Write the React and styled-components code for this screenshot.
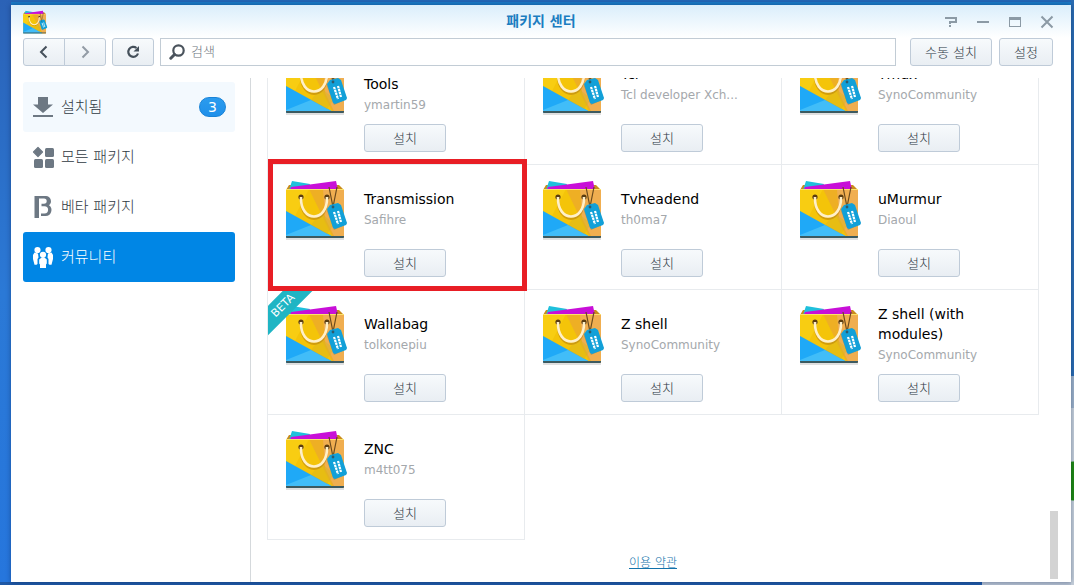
import React from 'react';
import styled, { createGlobalStyle, css } from 'styled-components';

const GlobalStyle = createGlobalStyle`
  * {
    box-sizing: border-box;
  }

  body {
    margin: 0;
    font-family: 'DejaVu Sans', 'Noto Sans CJK KR', sans-serif;
    font-size: 13px;
  }

  button,
  input {
    font: inherit;
  }
`;

const Desktop = styled.div`
  height: 100vh;
  padding: 5px 3px 3px 11px;
  overflow: hidden;
  background: radial-gradient(circle at 100% 481px, #1f8a12 19px, transparent 20px)
      right top / 14px 100% no-repeat,
    linear-gradient(#2a6cb2 376px, #9cb1c9 376px, #9cb1c9 408px, #c5cfda 408px)
      right top / 3px 100% no-repeat,
    linear-gradient(#b3bfd0, #b3bfd0) right bottom / 92px 3px no-repeat,
    linear-gradient(#1f58a5, #1f58a5) left bottom / 100% 3px no-repeat,
    linear-gradient(#2266b5 2px, #1a7bc8 2px) 11px top / 100% 5px no-repeat,
    linear-gradient(#2b62b6, #2b79d6 50%, #2676dd);
`;

const Window = styled.div`
  display: flex;
  flex-direction: column;
  height: 100%;
  background: linear-gradient(#daeefb, #fff 33px);
  box-shadow: 0 0 5px rgba(0, 20, 60, 0.4);
`;

const TitleBar = styled.header`
  display: grid;
  grid-template-columns: 1fr auto 1fr;
  align-items: center;
  height: 33px;
  padding: 0 11px;
`;

const Title = styled.h1`
  margin: 0;
  padding-bottom: 2px;
  font-size: 14px;
  line-height: 20px;
  font-weight: bold;
  color: #1b7dc0;
`;

const Controls = styled.div`
  display: flex;
  justify-content: flex-end;
  gap: 18px;
  padding-right: 6px;
`;

const Control = styled.button`
  display: flex;
  padding: 0;
  border: 0;
  background: none;
  color: #8c9aa5;
`;

const Toolbar = styled.div`
  display: flex;
  gap: 6px;
  padding: 0 18px 0 12px;
`;

const Button = styled.button`
  display: flex;
  align-items: center;
  justify-content: center;
  flex: none;
  width: ${props => props.$width}px;
  height: 28px;
  padding: 0 0 2px;
  border: 1px solid #bfcbd8;
  border-radius: 3px;
  background: linear-gradient(#f7fafc, #e9eef3);
  color: #2c3844;
  font-weight: 300;
`;

const ToolButton = styled(Button)`
  padding: 0;
  color: #45505b;
`;

const ButtonGroup = styled.div`
  display: flex;

  ${ToolButton}:first-child {
    border-radius: 3px 0 0 3px;
  }

  ${ToolButton}:last-child {
    margin-left: -1px;
    border-radius: 0 3px 3px 0;
    color: #929ba5;
  }
`;

const Actions = styled.div`
  display: flex;
  gap: 7px;
  margin-left: 8px;
`;

const Search = styled.label`
  display: flex;
  align-items: center;
  flex: 1;
  gap: 6px;
  height: 28px;
  padding: 0 8px;
  border: 1px solid #c2ccd5;
  background: #fff;
  color: #4a535c;
`;

const SearchInput = styled.input`
  flex: 1;
  min-width: 0;
  padding: 0 0 2px;
  border: 0;
  outline: 0;
  background: none;
  font-weight: 300;

  &::placeholder {
    color: #6c757e;
    opacity: 1;
  }
`;

const Body = styled.div`
  display: flex;
  flex: 1;
  min-height: 0;
  margin-top: 12px;
`;

const Sidebar = styled.nav`
  width: 240px;
  flex: none;
  padding: 4px 15px 0 12px;
  border-right: 1px solid #d5d9dc;
`;

const NavLabel = styled.span`
  padding-bottom: 4px;
`;

const NavItem = styled.a`
  display: flex;
  align-items: center;
  gap: 7px;
  height: 50px;
  padding: 0 9px;
  border-radius: 3px;
  font-size: 15px;
  font-weight: 300;
  color: #2f3942;
  text-decoration: none;

  svg {
    color: #6d7883;
  }

  ${props =>
    props.$hover &&
    css`
      background: #f3f9fe;
    `}

  ${props =>
    props.$active &&
    css`
      background: #0086e5;
      color: #fff;

      svg {
        color: #fff;
      }
    `}
`;

const Badge = styled.span`
  width: 27px;
  margin-left: auto;
  border: 1px solid #1883d8;
  border-radius: 10px;
  background: linear-gradient(#2b9bee, #1f90ea);
  color: #fff;
  font-size: 14px;
  font-weight: normal;
  line-height: 18px;
  text-align: center;
`;

const Content = styled.main`
  display: flex;
  flex-direction: column;
  justify-content: flex-end;
  flex: 1;
  min-width: 0;
  padding: 0 11px 0 16px;
  overflow: hidden;
`;

const Grid = styled.div`
  display: grid;
  flex: none;
  grid-template-columns: repeat(3, 1fr);
  padding: 0 1px 1px 0;
`;

const Card = styled.article`
  position: relative;
  display: flex;
  align-items: flex-start;
  gap: 14px;
  margin: 0 -1px -1px 0;
  padding: 14px 24px 12px 16px;
  border: 1px solid #e8ebee;
`;

const Info = styled.div`
  flex: 1;
  min-width: 0;
`;

const Text = styled.div`
  display: flex;
  flex-direction: column;
  justify-content: center;
  height: 60px;
  margin-bottom: 10px;
  line-height: 20px;
`;

const Name = styled.h2`
  margin: 0;
  font-size: 14px;
  font-weight: normal;
  color: #000;
`;

const Author = styled.span`
  height: 20px;
  font-size: 12px;
  line-height: 22px;
  white-space: nowrap;
  color: #a4a8ac;
`;

const Highlight = styled.span`
  position: absolute;
  z-index: 2;
  inset: -6px -3px -2px 0;
  border: 5px solid #e81e25;
  pointer-events: none;
`;

const Corner = styled.div`
  position: absolute;
  z-index: 1;
  top: 0;
  left: 0;
  width: 46px;
  height: 46px;
  overflow: hidden;
`;

const Ribbon = styled.span`
  position: absolute;
  top: 5px;
  left: -25px;
  width: 80px;
  background: #1fb5c4;
  color: #fff;
  font-size: 11px;
  line-height: 21px;
  text-align: center;
  transform: rotate(-45deg);
`;

const Footer = styled.footer`
  flex: none;
  height: 42px;
  padding-top: 13px;
  text-align: center;
  font-size: 12px;
  line-height: 20px;
`;

const TermsLink = styled.a`
  color: #1272ab;
  font-weight: 300;
`;

const Track = styled.div`
  display: flex;
  flex-direction: column;
  justify-content: flex-end;
  width: 8px;
  margin: 0 13px 3px 0;
`;

const Thumb = styled.div`
  height: 12%;
  min-height: 68px;
  background: #d3d3d3;
`;

const BagSvg = styled.svg`
  display: block;
  flex: none;
`;

const Bag = ({ width = 66, height = 66, viewBox = '1 1 66 66' }) => (
  <BagSvg width={width} height={height} viewBox={viewBox} aria-hidden="true">
    <path d="M3 58h58v4H3z" fill="#000" opacity=".12" />
    <path d="M3 12l3-5h50l5 5z" fill="#c98c1c" />
    <path d="M9 3l18 3-2 6H6z" fill="#1fc0dc" />
    <path d="M8 9l45-6 2 9H7z" fill="#c80fd8" />
    <path d="M3 11h58v48a1 1 0 0 1-1 1H4a1 1 0 0 1-1-1z" fill="#f4c409" />
    <path d="M3 11h23l-14 27-9-5z" fill="#f8cd12" />
    <path d="M26 11l24 49h11V11z" fill="#eeaf24" />
    <path d="M40 11h21v49H52L42 40z" fill="#f0ae50" />
    <path d="M3 33l49 27H3z" fill="#1fa9f7" />
    <path d="M3 57l25-10 24 13H3z" fill="#41bdf8" />
    <path d="M28 47l16 9 7-10-13-11z" fill="#d9b51c" opacity=".5" />
    <path d="M3 58h58v1a1 1 0 0 1-1 1H4a1 1 0 0 1-1-1z" fill="#3c5a60" />
    <path d="M3 11h58v1H3z" fill="#fbe26a" />
    <circle cx="18" cy="19" r="2.6" fill="#5a3c10" />
    <circle cx="44" cy="19" r="2.6" fill="#5a3c10" />
    <path d="M18 22C18 47 44 47 44 22" fill="none" stroke="#a86f10" strokeWidth="2.4" opacity=".45" />
    <path d="M18 19C17 45 45 45 44 19" fill="none" stroke="#fff0c8" strokeWidth="2.6" />
    <path d="M46 9l4 20M54 9l-4 20" fill="none" stroke="#6b4a1c" strokeWidth="1.2" />
    <path d="M44 33l4-6 8-1 8 20-13 6z" fill="#08506f" opacity=".25" />
    <path d="M44 31l3-4 8-2 3 2 6 18-1 2-11 4-2-1z" fill="#12a0d8" />
    <circle cx="50" cy="29" r="1.4" fill="#2f5a6c" />
    <path d="M51 34l4 12M55 33l3 11" fill="none" stroke="#fff" strokeWidth="2.2" strokeDasharray="2.4 .6" />
  </BagSvg>
);

const Icon = ({ size = 22, children }) => (
  <svg width={size} height={size} viewBox={`0 0 ${size} ${size}`} fill="currentColor" aria-hidden="true">
    {children}
  </svg>
);

const DownloadIcon = () => (
  <Icon>
    <path d="M6 1h10v7.500h5L11 17 1 8.500h5z" />
    <path d="M1 19h20v2H1z" />
  </Icon>
);

const TilesIcon = () => (
  <Icon>
    <path d="M6 1.500L10.500 6 6 10.500 1.500 6z" strokeLinejoin="round" stroke="currentColor" strokeWidth="1.200" />
    <rect x="13" y="2" width="9" height="9" rx="1.500" />
    <rect x="2" y="13" width="9" height="9" rx="1.500" />
    <rect x="13" y="13" width="9" height="9" rx="1.500" />
  </Icon>
);

const BetaIcon = () => (
  <Icon>
    <path d="M2.500 0H14a5 5.200 0 0 1 3 9.300 5.800 5.900 0 0 1-3.500 10.700H9v-2.600h3.500a3.600 3.600 0 0 0 0-7.200H9.500V7.800H12a2.700 2.700 0 0 0 0-5.400H7V22H2.500z" />
  </Icon>
);

const GroupIcon = () => (
  <Icon>
    <circle cx="5.500" cy="4" r="3.100" />
    <circle cx="16.500" cy="4" r="3.100" />
    <path d="M2.500 6.500L6 7.500l.5 4-1 1.500v5l-1 .8H2.500L1 13V9z" />
    <path d="M19.500 6.500L16 7.500l-.5 4 1 1.500v5l1 .8h2L21 13V9z" />
    <circle cx="11" cy="8.800" r="3.100" />
    <path d="M9 12h4l1.800 1.500v4L14 18.500V22H8v-3.500l-.8-1v-4z" />
  </Icon>
);

const HelpIcon = () => (
  <Icon size={14}>
    <path d="M1 3h11v4H6v2" fill="none" stroke="currentColor" strokeWidth="2" />
    <path d="M5 10h2v2H5z" />
  </Icon>
);

const MinimizeIcon = () => (
  <Icon size={14}>
    <path d="M1 6h12v2H1z" />
  </Icon>
);

const MaximizeIcon = () => (
  <Icon size={14}>
    <path d="M1 2h12v10H1zM2 5v6h10V5z" fillRule="evenodd" />
  </Icon>
);

const CloseIcon = () => (
  <Icon size={14}>
    <path d="M1.500 1.500l11 11M12.500 1.500l-11 11" stroke="currentColor" strokeWidth="2" />
  </Icon>
);

const ChevronLeftIcon = () => (
  <Icon size={14}>
    <path d="M9.500 1.500L4 7l5.500 5.500" fill="none" stroke="currentColor" strokeWidth="2" />
  </Icon>
);

const ChevronRightIcon = () => (
  <Icon size={14}>
    <path d="M4.500 1.500L10 7l-5.500 5.500" fill="none" stroke="currentColor" strokeWidth="2" />
  </Icon>
);

const RefreshIcon = () => (
  <Icon size={14}>
    <path d="M10.500 3A5 5 0 1 0 12 8.500" fill="none" stroke="currentColor" strokeWidth="2.200" />
    <path d="M13 1v5.500H7.500z" />
  </Icon>
);

const SearchIcon = () => (
  <Icon size={16}>
    <circle cx="9.500" cy="6.500" r="5.200" fill="none" stroke="currentColor" strokeWidth="2.200" />
    <path d="M5.500 10.500L1.800 14.200" stroke="currentColor" strokeWidth="3" strokeLinecap="round" />
  </Icon>
);

const navItems = [
  { id: 'installed', label: '설치됨', icon: DownloadIcon, badge: 3, hover: true },
  { id: 'all', label: '모든 패키지', icon: TilesIcon },
  { id: 'beta', label: '베타 패키지', icon: BetaIcon },
  { id: 'community', label: '커뮤니티', icon: GroupIcon, active: true },
];

const packages = [
  { name: 'SynoCli Monitor Tools', author: 'ymartin59' },
  { name: 'Tcl', author: 'Tcl developer Xch...' },
  { name: 'Tmux', author: 'SynoCommunity' },
  { name: 'Transmission', author: 'Safihre', highlight: true },
  { name: 'Tvheadend', author: 'th0ma7' },
  { name: 'uMurmur', author: 'Diaoul' },
  { name: 'Wallabag', author: 'tolkonepiu', beta: true },
  { name: 'Z shell', author: 'SynoCommunity' },
  { name: 'Z shell (with modules)', author: 'SynoCommunity' },
  { name: 'ZNC', author: 'm4tt075' },
];

const PackageCard = ({ name, author, beta, highlight }) => (
  <Card>
    <Bag />
    <Info>
      <Text>
        <Name>{name}</Name>
        <Author>{author}</Author>
      </Text>
      <Button $width={82}>설치</Button>
    </Info>
    {beta && (
      <Corner>
        <Ribbon>BETA</Ribbon>
      </Corner>
    )}
    {highlight && <Highlight />}
  </Card>
);

const App = () => {
  return (
    <Desktop>
      <GlobalStyle />
      <Window>
        <TitleBar>
          <Bag width={26} height={26} viewBox="0 1 66 61" />
          <Title>패키지 센터</Title>
          <Controls>
            <Control aria-label="도움말">
              <HelpIcon />
            </Control>
            <Control aria-label="최소화">
              <MinimizeIcon />
            </Control>
            <Control aria-label="최대화">
              <MaximizeIcon />
            </Control>
            <Control aria-label="닫기">
              <CloseIcon />
            </Control>
          </Controls>
        </TitleBar>
        <Toolbar>
          <ButtonGroup>
            <ToolButton $width={42} aria-label="뒤로">
              <ChevronLeftIcon />
            </ToolButton>
            <ToolButton $width={42} aria-label="앞으로">
              <ChevronRightIcon />
            </ToolButton>
          </ButtonGroup>
          <ToolButton $width={42} aria-label="새로 고침">
            <RefreshIcon />
          </ToolButton>
          <Search>
            <SearchIcon />
            <SearchInput type="text" placeholder="검색" aria-label="검색" />
          </Search>
          <Actions>
            <Button $width={82}>수동 설치</Button>
            <Button $width={54}>설정</Button>
          </Actions>
        </Toolbar>
        <Body>
          <Sidebar>
            {navItems.map(item => (
              <NavItem
                key={item.id}
                href={`#${item.id}`}
                $hover={item.hover}
                $active={item.active}
              >
                <item.icon />
                <NavLabel>{item.label}</NavLabel>
                {item.badge && <Badge>{item.badge}</Badge>}
              </NavItem>
            ))}
          </Sidebar>
          <Content>
            <Grid>
              {packages.map(p => (
                <PackageCard key={p.name} {...p} />
              ))}
            </Grid>
            <Footer>
              <TermsLink href="#terms">이용 약관</TermsLink>
            </Footer>
          </Content>
          <Track>
            <Thumb />
          </Track>
        </Body>
      </Window>
    </Desktop>
  );
};

export default App;
